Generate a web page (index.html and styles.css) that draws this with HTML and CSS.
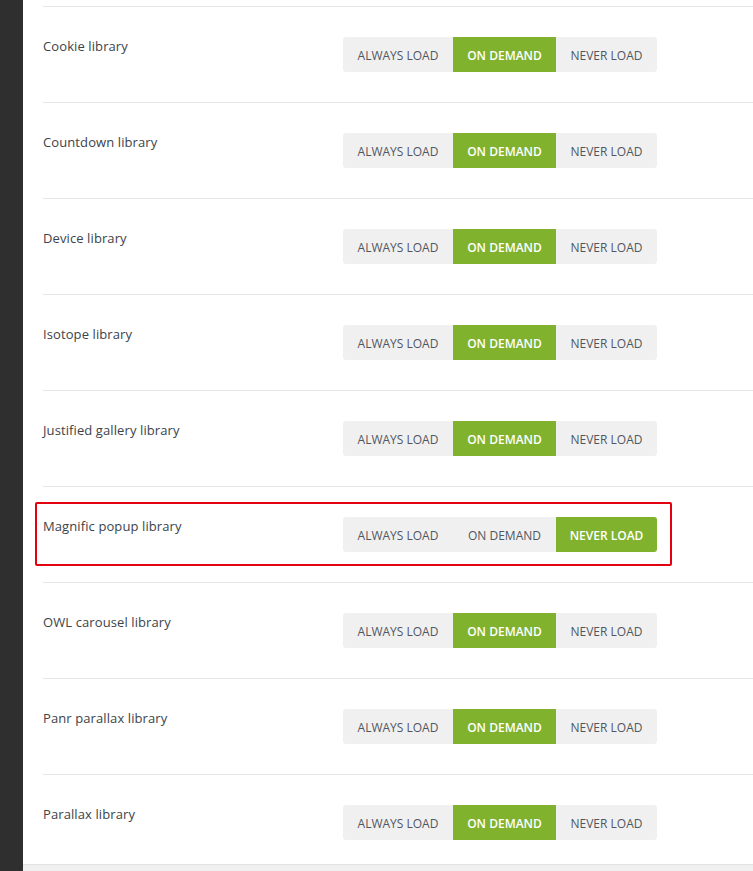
FILE: index.html
```html
<!DOCTYPE html>
<html>
<head>
<meta charset="utf-8">
<link rel="stylesheet" href="styles.css">
</head>
<body>
<div class="layout">
  <aside class="sidebar"></aside>
  <main class="content">
    <div class="rows">
      <div class="row"><div class="label">Cookie library</div><div class="seg"><span class="opt">ALWAYS LOAD</span><span class="opt on">ON DEMAND</span><span class="opt">NEVER LOAD</span></div></div>
      <div class="row"><div class="label">Countdown library</div><div class="seg"><span class="opt">ALWAYS LOAD</span><span class="opt on">ON DEMAND</span><span class="opt">NEVER LOAD</span></div></div>
      <div class="row"><div class="label">Device library</div><div class="seg"><span class="opt">ALWAYS LOAD</span><span class="opt on">ON DEMAND</span><span class="opt">NEVER LOAD</span></div></div>
      <div class="row"><div class="label">Isotope library</div><div class="seg"><span class="opt">ALWAYS LOAD</span><span class="opt on">ON DEMAND</span><span class="opt">NEVER LOAD</span></div></div>
      <div class="row"><div class="label">Justified gallery library</div><div class="seg"><span class="opt">ALWAYS LOAD</span><span class="opt on">ON DEMAND</span><span class="opt">NEVER LOAD</span></div></div>
      <div class="row"><div class="label">Magnific popup library</div><div class="seg"><span class="opt">ALWAYS LOAD</span><span class="opt">ON DEMAND</span><span class="opt on last">NEVER LOAD</span></div><div class="highlight"></div></div>
      <div class="row"><div class="label">OWL carousel library</div><div class="seg"><span class="opt">ALWAYS LOAD</span><span class="opt on">ON DEMAND</span><span class="opt">NEVER LOAD</span></div></div>
      <div class="row"><div class="label">Panr parallax library</div><div class="seg"><span class="opt">ALWAYS LOAD</span><span class="opt on">ON DEMAND</span><span class="opt">NEVER LOAD</span></div></div>
      <div class="row"><div class="label">Parallax library</div><div class="seg"><span class="opt">ALWAYS LOAD</span><span class="opt on">ON DEMAND</span><span class="opt">NEVER LOAD</span></div></div>
    </div>
    <div class="footer"></div>
  </main>
</div>
</body>
</html>
```

FILE: styles.css
```css
html, body {
  margin: 0;
  padding: 0;
  background: #ffffff;
  font-family: "Open Sans", "Liberation Sans", sans-serif;
  overflow: hidden;
}
.layout {
  display: flex;
  height: 871px;
}
.sidebar {
  width: 23px;
  flex: 0 0 23px;
  background: #2f2f2f;
}
.content {
  flex: 1;
  display: flex;
  flex-direction: column;
}
.rows {
  padding: 6px 0 0 20px;
}
.row {
  position: relative;
  display: flex;
  align-items: flex-start;
  border-top: 1px solid #e6e6e6;
  padding: 30px 0;
}
.row:last-child {
  padding-bottom: 24px;
}
.label {
  width: 300px;
  flex: 0 0 300px;
  margin-top: -1px;
  font-size: 13px;
  line-height: 20px;
  color: #3c434a;
  letter-spacing: 0.1px;
}
.seg {
  display: flex;
  background: #f0f0f1;
  border-radius: 3px;
  height: 35px;
}
.opt {
  display: flex;
  align-items: center;
  justify-content: center;
  padding-top: 1px;
  box-sizing: border-box;
  font-size: 12px;
  color: #50575e;
}
.opt:nth-child(1) { width: 110px; }
.opt:nth-child(2) { width: 103px; }
.opt:nth-child(3) { width: 101px; }
.opt.on {
  background: #80b22e;
  color: #ffffff;
  font-weight: 600;
}
.opt.last {
  border-radius: 0 3px 3px 0;
}
.highlight {
  position: absolute;
  top: 15px;
  left: -8px;
  width: 637px;
  height: 64px;
  box-sizing: border-box;
  border: 2px solid #e3000f;
  border-radius: 2px;
}
.footer {
  flex: 1;
  background: #f0f0f1;
  border-top: 1px solid #e2e2e2;
}
```
